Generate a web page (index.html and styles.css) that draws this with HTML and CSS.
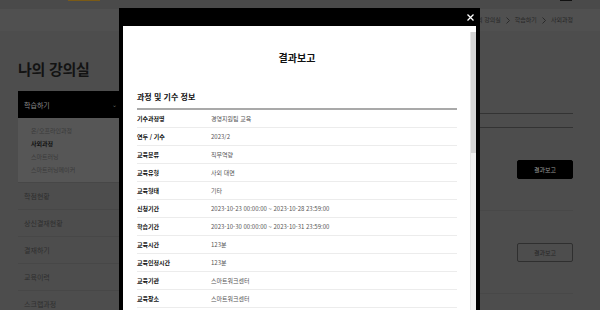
FILE: index.html
```html
<!DOCTYPE html>
<html lang="ko">
<head>
<meta charset="utf-8">
<title>나의 강의실 - 결과보고</title>
<link rel="stylesheet" href="styles.css">
</head>
<body>
<div class="topbar"><span class="gold"></span><span class="blk"></span></div>
<div class="crumbbar">
  <nav class="crumbs">
    <span>나의 강의실</span>
    <svg class="chev" viewBox="0 0 4 7" width="4" height="7"><path d="M0.5 0.5 L3.5 3.5 L0.5 6.5" fill="none" stroke="#2a2a2a" stroke-width="1"/></svg>
    <span>학습하기</span>
    <svg class="chev" viewBox="0 0 4 7" width="4" height="7"><path d="M0.5 0.5 L3.5 3.5 L0.5 6.5" fill="none" stroke="#2a2a2a" stroke-width="1"/></svg>
    <span>사외과정</span>
  </nav>
</div>
<div class="page">
  <aside class="sidebar">
    <h1 class="title">나의 강의실</h1>
    <div class="menu-active"><span>학습하기</span><span class="caret">⌄</span></div>
    <ul class="submenu">
      <li>온/오프라인과정</li>
      <li class="on">사외과정</li>
      <li>스마트러닝</li>
      <li>스마트러닝메이커</li>
    </ul>
    <ul class="menu">
      <li>학점현황</li>
      <li>상신결재현황</li>
      <li>결재하기</li>
      <li>교육이력</li>
      <li>스크랩과정</li>
    </ul>
  </aside>
  <main class="main">
    <div class="list-head"></div>
    <div class="list-row"><button class="btn btn-dark">결과보고</button></div>
    <div class="list-row"><button class="btn btn-line">결과보고</button></div>
  </main>
</div>

<div class="modal">
  <div class="modal-head">
    <svg class="close" viewBox="0 0 7 7" width="7" height="7"><path d="M0.5 0.5 L6.5 6.5 M6.5 0.5 L0.5 6.5" stroke="#fff" stroke-width="1.3"/></svg>
  </div>
  <div class="modal-body">
    <div class="modal-content">
      <h2 class="modal-title">결과보고</h2>
      <h3 class="sec-title">과정 및 기수 정보</h3>
      <div class="info">
        <div class="row"><span class="lbl">기수과정명</span><span class="val">경영지원팀 교육</span></div>
        <div class="row"><span class="lbl">연두 / 기수</span><span class="val">2023/2</span></div>
        <div class="row"><span class="lbl">교육분류</span><span class="val">직무역량</span></div>
        <div class="row"><span class="lbl">교육유형</span><span class="val">사외 대면</span></div>
        <div class="row"><span class="lbl">교육형태</span><span class="val">기타</span></div>
        <div class="row"><span class="lbl">신청기간</span><span class="val">2023-10-23 00:00:00 ~ 2023-10-28 23:59:00</span></div>
        <div class="row"><span class="lbl">학습기간</span><span class="val">2023-10-30 00:00:00 ~ 2023-10-31 23:59:00</span></div>
        <div class="row"><span class="lbl">교육시간</span><span class="val">123분</span></div>
        <div class="row"><span class="lbl">교육인정시간</span><span class="val">123분</span></div>
        <div class="row"><span class="lbl">교육기관</span><span class="val">스마트워크센터</span></div>
        <div class="row"><span class="lbl">교육장소</span><span class="val">스마트워크센터</span></div>
      </div>
    </div>
    <div class="scrollbar"><div class="thumb"></div></div>
  </div>
</div>
</body>
</html>
```

FILE: styles.css
```css
* { box-sizing: border-box; }
html, body { margin: 0; padding: 0; }
body {
  width: 600px;
  height: 310px;
  overflow: hidden;
  background: #4d4d4d;
  font-family: "Noto Sans CJK KR", "Noto Sans", sans-serif;
  color: #222;
}
ul { list-style: none; margin: 0; padding: 0; }
h1, h2, h3 { margin: 0; }

.topbar {
  height: 9px;
  background: #4a4a4a;
  display: flex;
}
.gold {
  width: 32px;
  height: 1px;
  margin-left: 68px;
  background: #7a5a16;
}
.blk {
  width: 12px;
  height: 1px;
  margin-left: auto;
  margin-right: 28px;
  background: #111;
}

.crumbbar {
  height: 22px;
  background: #505050;
  display: flex;
  justify-content: flex-end;
  align-items: center;
  padding-right: 27px;
}
.crumbs {
  display: flex;
  align-items: center;
  gap: 5px;
  font-size: 6px;
  color: #262626;
  line-height: 1;
}
.chev { display: block; }

.page {
  display: flex;
  height: 279px;
  overflow: hidden;
  padding-left: 18px;
  padding-right: 27px;
}
.sidebar { width: 101px; flex: none; }
.title {
  padding-top: 28px;
  font-size: 15px;
  line-height: 20px;
  font-weight: 700;
  color: #131313;
  letter-spacing: -0.3px;
}
.menu-active {
  margin-top: 12px;
  height: 27px;
  background: #000;
  display: flex;
  align-items: center;
  justify-content: space-between;
  padding: 0 2px 0 6px;
  font-size: 7px;
  color: #8a8a8a;
}
.caret { font-size: 6px; color: #666; }
.submenu {
  background: #565656;
  padding: 6px 0 6px 13px;
  font-size: 6px;
  line-height: 13px;
  color: #3a3a3a;
}
.submenu .on { color: #121212; font-weight: 700; }
.menu li {
  height: 27px;
  display: flex;
  align-items: center;
  padding-left: 6px;
  font-size: 7px;
  color: #2e2e2e;
  border-top: 1px solid #474747;
}

.main {
  flex: 1;
  margin-left: 20px;
  padding-top: 82px;
}
.list-head {
  height: 15px;
  border-top: 1px solid #333;
  border-bottom: 1px solid #333;
}
.list-row {
  height: 83px;
  display: flex;
  align-items: center;
  justify-content: flex-end;
  border-bottom: 1px solid #484848;
}
.btn {
  width: 56px;
  height: 19px;
  border-radius: 2px;
  font-family: inherit;
  font-size: 6px;
  padding: 0;
}
.btn-dark { background: #000; border: 1px solid #000; color: #9a9a9a; }
.btn-line { background: transparent; border: 1px solid #2f2f2f; color: #262626; }

.modal {
  position: absolute;
  left: 119px;
  top: 8px;
  width: 361px;
  height: 302px;
  background: #000;
  display: flex;
  flex-direction: column;
}
.modal-head {
  height: 18px;
  flex: none;
  display: flex;
  justify-content: flex-end;
  align-items: center;
  padding-right: 6px;
}
.close { display: block; }
.modal-body {
  flex: 1;
  min-height: 0;
  overflow: hidden;
  margin: 0 4px;
  background: #fff;
  display: flex;
}
.modal-content {
  flex: 1;
  padding: 25px 13px 0 14px;
}
.modal-title {
  text-align: center;
  font-size: 10px;
  line-height: 14px;
  font-weight: 700;
  color: #111;
}
.sec-title {
  margin-top: 26px;
  font-size: 8px;
  line-height: 12px;
  font-weight: 700;
  color: #111;
  margin-bottom: 5px;
}
.info { border-top: 2px solid #a9a9a9; }
.row {
  height: 18px;
  display: flex;
  align-items: center;
  border-bottom: 1px solid #ececec;
  font-size: 6px;
}
.lbl { width: 74px; font-weight: 700; color: #111; }
.val { color: #555; }
.scrollbar {
  width: 6px;
  margin-top: 6px;
  background: #f1f1f1;
  border-left: 1px solid #e6e6e6;
}
.thumb { height: 121px; background: #d4d4d4; }
```
